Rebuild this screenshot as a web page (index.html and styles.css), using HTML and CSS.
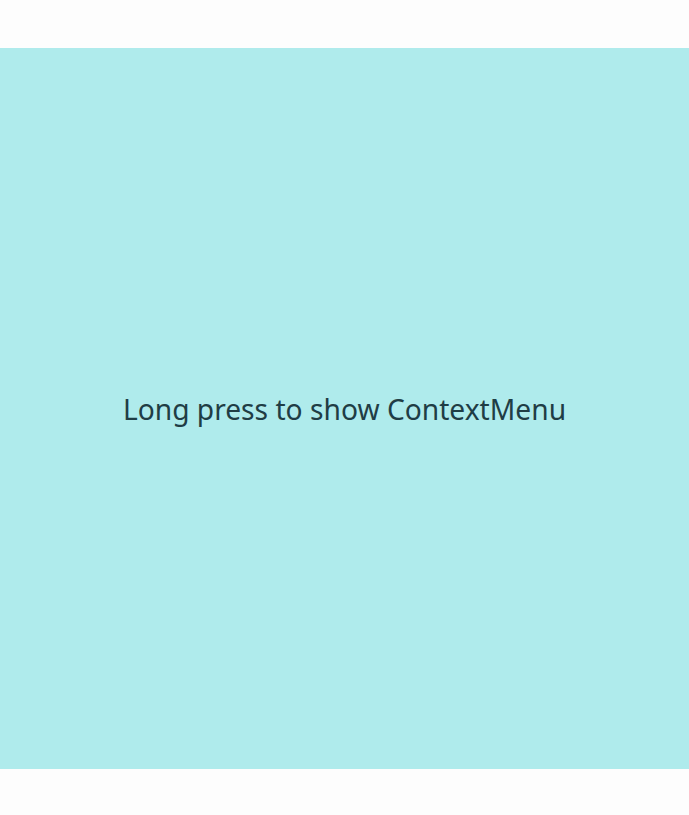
FILE: index.html
```html
<!DOCTYPE html>
<html>
<head>
<meta charset="utf-8">
<link rel="stylesheet" href="styles.css">
</head>
<body>
<div class="page">
  <div class="top"></div>
  <div class="panel">
    <span class="label">Long press to show ContextMenu</span>
  </div>
</div>
</body>
</html>
```
FILE: styles.css
```css
html, body {
  margin: 0;
  padding: 0;
  background: #fdfdfd;
}
.page {
  width: 689px;
  height: 815px;
  display: flex;
  flex-direction: column;
}
.top {
  height: 48px;
  flex: none;
}
.panel {
  height: 721px;
  flex: none;
  background: #afebec;
  display: flex;
  align-items: center;
  justify-content: center;
}
.label {
  font-family: "Noto Sans", sans-serif;
  font-size: 28.2px;
  color: #1f3d45;
  margin-top: 0;
}
```
